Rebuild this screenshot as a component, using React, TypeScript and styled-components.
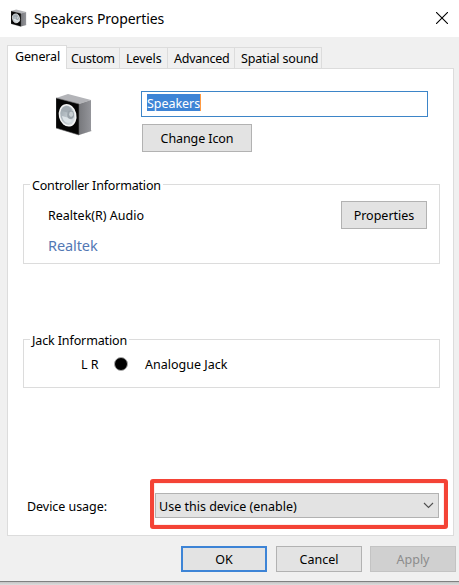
import React from "react";
import styled, { createGlobalStyle, css } from "styled-components";

const GlobalStyle = createGlobalStyle`
  * { box-sizing: border-box; }
  html, body { margin: 0; padding: 0; overflow: hidden; }
  body { background: #d4d4d4; }
  button, input { font: inherit; }
`;

const Screen = styled.div`
  width: 459px;
  height: 585px;
  background: linear-gradient(#c4c4c4, #dedede) bottom / 100% 3px no-repeat #fff;
  font-family: "Noto Sans", sans-serif;
  font-size: 12.5px;
  line-height: 18px;
  color: #000;
`;

const Dialog = styled.main`
  display: flex;
  flex-direction: column;
  height: 582px;
  background: #f0f0f0;
  border-bottom: 1px solid #808080;
`;

const TitleBar = styled.header`
  display: flex;
  align-items: flex-start;
  height: 37px;
  padding: 9px 11px 0 11px;
  background: #fff;
`;

const Title = styled.h1`
  flex: 1;
  margin: 0 0 0 7px;
  font-size: 14px;
  letter-spacing: -0.07px;
  line-height: 20px;
  font-weight: 400;
`;

const CloseButton = styled.button`
  display: flex;
  margin: 3px 0 0;
  padding: 0;
  border: 0;
  background: none;
`;

const Text = styled.span<{ $w: number }>`
  display: block;
  flex: none;
  width: ${(p) => p.$w}px;
  white-space: nowrap;
`;

const TabList = styled.nav`
  display: flex;
  align-items: flex-end;
  height: 31px;
  padding-left: 7px;
`;

const Tab = styled.button<{ $width: number; $inset: number; $tracking: number; $active?: boolean }>`
  width: ${(p) => p.$width}px;
  height: 21px;
  padding: 2px 0 0 ${(p) => p.$inset}px;
  border: 1px solid #dcdcdc;
  border-width: 1px 1px 0 0;
  background: #f0f0f0;
  text-align: left;
  line-height: 18px;
  letter-spacing: ${(p) => p.$tracking}px;
  white-space: nowrap;
  ${(p) =>
    p.$active &&
    css`
      z-index: 1;
      height: 24px;
      margin-bottom: -1px;
      padding-top: 2px;
      padding-bottom: 3px;
      border-left-width: 1px;
      background: #fff;
    `}
`;

const Panel = styled.section`
  display: flex;
  flex-direction: column;
  width: 447px;
  height: 468px;
  margin-left: 7px;
  padding: 22px 13px 0 15px;
  border: 1px solid #dcdcdc;
  background: #fff;
`;

const DeviceHeader = styled.div`
  display: flex;
  height: 93px;
  padding-left: 33px;
`;

const DeviceIcon = styled.div`
  width: 85px;
  padding-top: 2px;
`;

const NameColumn = styled.div`
  display: flex;
  flex-direction: column;
  align-items: flex-start;
  gap: 7px;
`;

const NameField = styled.div`
  display: flex;
  align-items: flex-start;
  width: 287px;
  height: 26px;
  padding: 2px 5px;
  border: 1px solid #3d85c8;
`;

const Selection = styled.span`
  height: 17px;
  width: 54px;
  border-right: 1px solid #ff9a42;
  background: #3d84d6;
  color: #fff;
  line-height: 19px;
  letter-spacing: -0.05px;
  white-space: nowrap;
`;

const Button = styled.button<{ $width?: number; $height?: number; $primary?: boolean }>`
  display: flex;
  align-items: center;
  justify-content: center;
  width: ${(p) => p.$width ?? 86}px;
  height: ${(p) => p.$height ?? 28}px;
  padding: 1px 0 0;
  border: ${(p) => (p.$primary ? "2px solid #3d84d6" : "1px solid #b2b2b2")};
  background: #e3e3e3;
  color: #000;
  white-space: nowrap;
  &:disabled {
    border-color: #c3c3c3;
    background: #d0d0d0;
    color: #8c8c8c;
  }
`;

const IconButton = styled(Button)`
  margin-left: 1px;
  letter-spacing: -0.1px;
`;

const OkButton = styled(Button)`
  margin-right: 1px;
`;

const Group = styled.section<{ $height: number; $after: number }>`
  width: 417px;
  height: ${(p) => p.$height}px;
  margin-bottom: ${(p) => p.$after}px;
  border: 1px solid #dcdcdc;
`;

const GroupTitle = styled.h2<{ $width: number; $tracking: number }>`
  width: ${(p) => p.$width}px;
  height: 18px;
  margin: -9px 0 0 6px;
  padding-left: 2px;
  background: #fff;
  font-size: 12.5px;
  line-height: 20px;
  font-weight: 400;
  letter-spacing: ${(p) => p.$tracking}px;
  white-space: nowrap;
`;

const ControllerRow = styled.div`
  display: flex;
  justify-content: space-between;
  padding: 7px 12px 0 24px;
`;

const ControllerNames = styled.div`
  padding-top: 6px;
`;

const Vendor = styled.a`
  display: block;
  margin-top: 10px;
  color: #5378b4;
  font-size: 14.5px;
  letter-spacing: -0.1px;
  line-height: 20px;
`;

const JackRow = styled.div`
  display: flex;
  align-items: center;
  padding: 7px 0 0 57px;
`;

const JackDot = styled.span`
  width: 14px;
  height: 14px;
  margin: -3px 17px 0 14px;
  border: 1px solid #aaa;
  border-radius: 50%;
  background: #000;
`;

const UsageRow = styled.div`
  display: flex;
  align-items: center;
  padding-left: 4px;
`;

const UsageLabel = styled.span`
  width: 123px;
  padding-top: 5px;
  letter-spacing: -0.05px;
`;

const Highlight = styled.div`
  width: 298px;
  height: 50px;
  margin-right: -9px;
  padding: 10px 5px 0 1px;
  border: 4px solid #f44336;
  border-radius: 3px;
  box-shadow: inset 0 0 1px #f44336;
`;

const Select = styled.div`
  display: flex;
  align-items: center;
  justify-content: space-between;
  width: 284px;
  height: 25px;
  padding: 2px 4px 0 3px;
  border: 1px solid #b2b2b2;
  background: #e3e3e3;
`;

const Chevron = styled.svg`
  flex: none;
  margin-top: -2px;
`;

const Footer = styled.footer`
  display: flex;
  justify-content: flex-end;
  gap: 8px;
  padding: 10px 3px 0 0;
`;

function SpeakerIcon({ width, height }: { width: number; height: number }) {
  return (
    <svg width={width} height={height} viewBox="0 0 37 43" preserveAspectRatio="none" aria-hidden="true">
      <defs>
        <linearGradient id="side" x1="0" x2="1">
          <stop stopColor="#77787c" />
          <stop offset="1" stopColor="#94959a" />
        </linearGradient>
        <linearGradient id="cone" x1="0" y1="0" x2="1" y2="1">
          <stop stopColor="#929da5" />
          <stop offset="1" stopColor="#e8eef1" />
        </linearGradient>
      </defs>
      <path d="m23 42 13-4-1-1z" fill="#ccc" />
      <path d="m0 5 12-4 23 6-12 4z" fill="#b3b4b8" />
      <path d="m23 11 12-4v31l-12 4z" fill="url(#side)" />
      <path d="m0 5 23 6v31L0 35z" fill="#050505" stroke="#5e5e60" strokeWidth=".6" />
      <ellipse cx="11.6" cy="22.3" rx="8" ry="10.6" transform="rotate(-13 11.6 22.3)" fill="url(#cone)" stroke="#f2f3f3" strokeWidth="1.6" />
      <path d="M6 18c2-6 7-6 10-1l-3 3z" fill="#a2abb2" />
      <path d="M6 23c1 6 6 9 10 5l-3-3z" fill="#dce3e7" />
      <ellipse cx="14.6" cy="21.8" rx="3.4" ry="4.3" fill="#99a2a9" />
      <ellipse cx="15.1" cy="21.2" rx="2" ry="2.7" fill="#c9d0d4" />
    </svg>
  );
}

const tabs = [
  { label: "General", width: 60, inset: 7, textWidth: 44, tracking: -0.15 },
  { label: "Custom", width: 53, inset: 4, textWidth: 44, tracking: -0.3 },
  { label: "Levels", width: 48, inset: 6, textWidth: 36, tracking: -0.05 },
  { label: "Advanced", width: 67, inset: 6, textWidth: 56, tracking: -0.25 },
  { label: "Spatial sound", width: 87, inset: 6, textWidth: 78, tracking: -0.17 },
];

export default function App() {
  return (
    <Screen>
      <GlobalStyle />
      <Dialog>
        <TitleBar>
          <SpeakerIcon width={16} height={18} />
          <Title>Speakers Properties</Title>
          <CloseButton aria-label="Close">
            <svg width="12" height="12" viewBox="0 0 12 12">
              <path d="m0 0 12 12M12 0 0 12" stroke="#000" strokeWidth="1.1" />
            </svg>
          </CloseButton>
        </TitleBar>
        <TabList>
          {tabs.map((tab, i) => (
            <Tab key={tab.label} $width={tab.width} $inset={tab.inset} $tracking={tab.tracking} $active={i === 0}>
              <Text $w={tab.textWidth}>{tab.label}</Text>
            </Tab>
          ))}
        </TabList>
        <Panel>
          <DeviceHeader>
            <DeviceIcon>
              <SpeakerIcon width={37} height={43} />
            </DeviceIcon>
            <NameColumn>
              <NameField>
                <Selection>Speakers</Selection>
              </NameField>
              <IconButton $width={110}>Change Icon</IconButton>
            </NameColumn>
          </DeviceHeader>
          <Group $height={80} $after={75}>
            <GroupTitle $width={133} $tracking={-0.18}>Controller Information</GroupTitle>
            <ControllerRow>
              <ControllerNames>
                <Text $w={97}>Realtek(R) Audio</Text>
                <Vendor>Realtek</Vendor>
              </ControllerNames>
              <Button>Properties</Button>
            </ControllerRow>
          </Group>
          <Group $height={49} $after={91}>
            <GroupTitle $width={99} $tracking={-0.12}>Jack Information</GroupTitle>
            <JackRow>
              <Text $w={19}>L R</Text>
              <JackDot />
              <Text $w={84}>Analogue Jack</Text>
            </JackRow>
          </Group>
          <UsageRow>
            <UsageLabel>Device usage:</UsageLabel>
            <Highlight>
              <Select>
                <Text $w={138}>Use this device (enable)</Text>
                <Chevron width="11" height="7" viewBox="0 0 11 7" fill="none">
                  <path d="m1 1 4.5 4.5L10 1" stroke="#505050" strokeWidth="1.1" />
                </Chevron>
              </Select>
            </Highlight>
          </UsageRow>
        </Panel>
        <Footer>
          <OkButton $height={26} $primary>OK</OkButton>
          <Button $height={26}>Cancel</Button>
          <Button $height={26} disabled>Apply</Button>
        </Footer>
      </Dialog>
    </Screen>
  );
}
